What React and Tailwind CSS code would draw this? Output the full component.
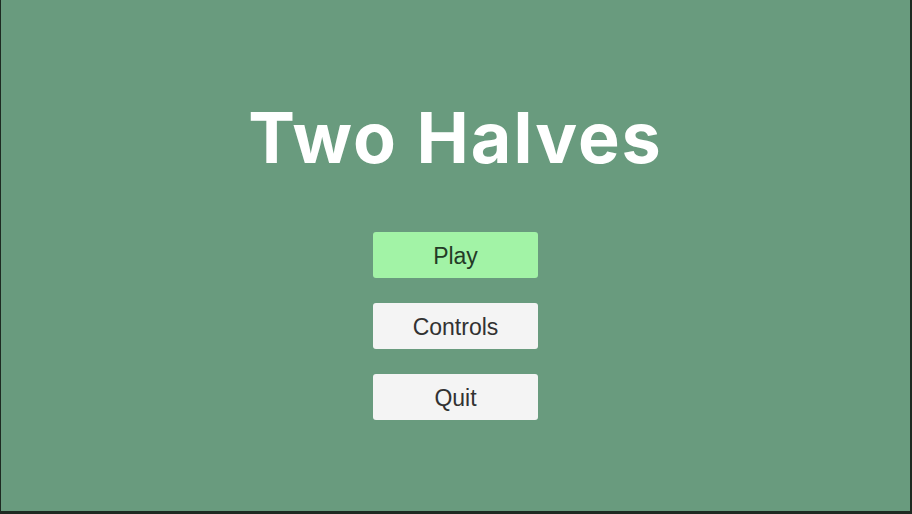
import React from "react";

// main menu screen
const MenuButton = ({ label, active }) => (
  <button
    className={`w-[165px] h-[46px] rounded-[3px] text-[23px] leading-[46px] pt-px ${
      active ? "bg-[#a2f3a6] text-[#243b26]" : "bg-[#f4f4f4] text-[#323232]"
    }`}
    style={{ fontFamily: "'Liberation Sans', Arial, sans-serif" }}
  >
    {label}
  </button>
);

export default function App() {
  return (
    <div className="w-[912px] h-[514px] bg-[#1e2a22] pl-px pr-[2px] pb-[3px]">
      <div className="w-full h-full bg-[#699b7e] flex flex-col items-center pt-[95px]">
        <h1
          className="text-white text-[70px] font-bold leading-[86px] tracking-[2px]"
          style={{ fontFamily: "Inter, 'Open Sans', sans-serif" }}
        >
          Two Halves
        </h1>
        <div className="flex flex-col gap-[25px] mt-[51px]">
          <MenuButton label="Play" active />
          <MenuButton label="Controls" />
          <MenuButton label="Quit" />
        </div>
      </div>
    </div>
  );
}
